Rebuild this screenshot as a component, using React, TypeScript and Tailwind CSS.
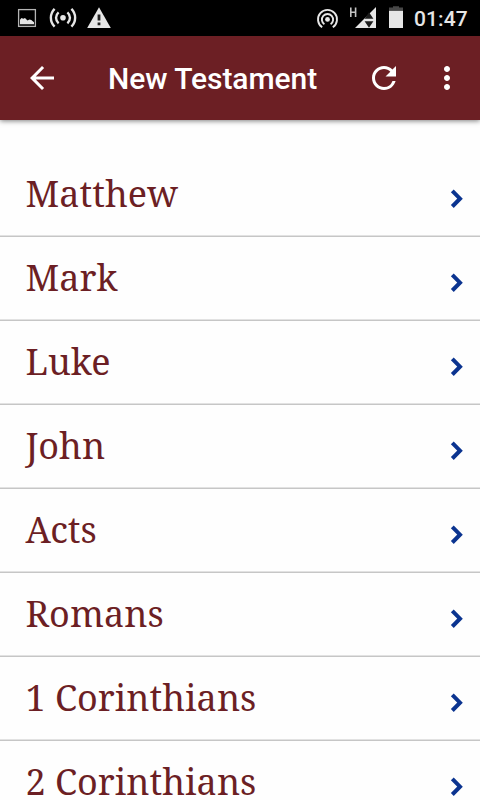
import { MdArrowBack, MdMoreVert, MdRefresh } from 'react-icons/md';

const books = [
  'Matthew',
  'Mark',
  'Luke',
  'John',
  'Acts',
  'Romans',
  '1 Corinthians',
  '2 Corinthians',
];

function StatusBar() {
  return (
    <div className="flex h-9 shrink-0 items-center justify-between bg-black text-[#e6e6e6]">
      {/* Notifications */}
      <svg width="120" height="36" viewBox="0 0 120 36" fill="none">
        <rect x="18.6" y="9.6" width="16.8" height="16.8" stroke="#b4b4b4" strokeWidth="1.3" />
        <path d="M20 24.3V19.8l1.5-1.8 1.8.8 1.7-.8 2.5 2.4 2-1 1.8.5 2.7 2.4v2z" fill="currentColor" />
        <circle cx="63" cy="17.8" r="2.8" fill="currentColor" />
        <g stroke="currentColor" strokeWidth="2.4">
          <path d="M58.6 12.3a7.2 7.2 0 0 0 0 11M67.4 12.3a7.2 7.2 0 0 1 0 11" />
          <path d="M54.6 8.9a12.5 12.5 0 0 0 0 17.8M71.4 8.9a12.5 12.5 0 0 1 0 17.8" />
        </g>
        <path d="M99 7.3 110.8 28H87.2z" fill="currentColor" />
        <path d="M97.6 14.5h2.8v6h-2.8zM97.6 22.6h2.8v2.6h-2.8z" fill="#222" />
      </svg>

      {/* System status */}
      <div className="flex items-center">
        <svg width="98" height="36" viewBox="0 0 98 36" fill="none">
          <circle cx="20.5" cy="19.4" r="2.4" fill="currentColor" />
          <g stroke="currentColor" strokeWidth="1.9">
            <path d="M17.4 24.3a5.6 5.6 0 1 1 6.2 0" />
            <path d="M15.2 27.3a9.5 9.5 0 1 1 10.6 0" />
          </g>
          <path d="M43.8 7.5v9.5M48.6 7.5v9.5M43.8 12.3h4.8" stroke="#c4c4c4" strokeWidth="1.6" />
          <path d="M48 28 69 7v21z" fill="currentColor" />
          <path d="M57.6 18.8 62 12.3l4.4 6.5zM57.6 21.2h8.8L62 27.7z" fill="#1c1c1c" />
          <path d="M86 6.2h6v1.2h4v3.4H82V7.4h4z" fill="#484848" />
          <path d="M82 10.8h14V28H82z" fill="currentColor" />
        </svg>
        <span className="w-[75px] pt-0.5 pl-[9px] font-['Roboto',sans-serif] text-[21px] leading-none font-medium tracking-[0.1px]">
          01:47
        </span>
      </div>
    </div>
  );
}

function AppBar() {
  return (
    <header className="z-10 flex h-21 shrink-0 items-center bg-[#6c1f24] px-[15px] text-white shadow-[0_1px_5px_rgba(0,0,0,0.5)]">
      <button aria-label="Back" className="pl-[9px]">
        <MdArrowBack className="size-9" />
      </button>
      <h1 className="ml-12 flex-1 pt-0.5 font-['Roboto',sans-serif] text-[30px] leading-9 font-medium tracking-[-0.05px] whitespace-nowrap">
        New Testament
      </h1>
      <button aria-label="Refresh">
        <MdRefresh className="size-9" />
      </button>
      <button aria-label="More options" className="ml-[27px]">
        <MdMoreVert className="size-9" />
      </button>
    </header>
  );
}

function BookRow({ name }: { name: string }) {
  return (
    <li className="flex h-21 shrink-0 items-center justify-between border-b border-[#c6c6c6] pr-[17px] pl-[25.5px] shadow-[inset_0_-1px_0_#e2e2e2]">
      <span className="pb-0.5 font-['Noto_Serif','DejaVu_Serif_Condensed','DejaVu_Serif',serif] text-[36px] leading-10 text-[#6c1f24]">
        {name}
      </span>
      <svg className="mt-2" width="14" height="20" viewBox="0 0 14 20" fill="none">
        <path d="m3.3 1.9 7.7 7.8-7.7 7.8" stroke="#0b3490" strokeWidth="4" />
      </svg>
    </li>
  );
}

export default function App() {
  return (
    <div className="flex h-screen w-full flex-col overflow-hidden bg-[#fefefe]">
      <StatusBar />
      <AppBar />
      <ul className="flex min-h-0 flex-1 flex-col overflow-hidden pt-[33px]">
        {books.map((book) => (
          <BookRow key={book} name={book} />
        ))}
      </ul>
    </div>
  );
}
